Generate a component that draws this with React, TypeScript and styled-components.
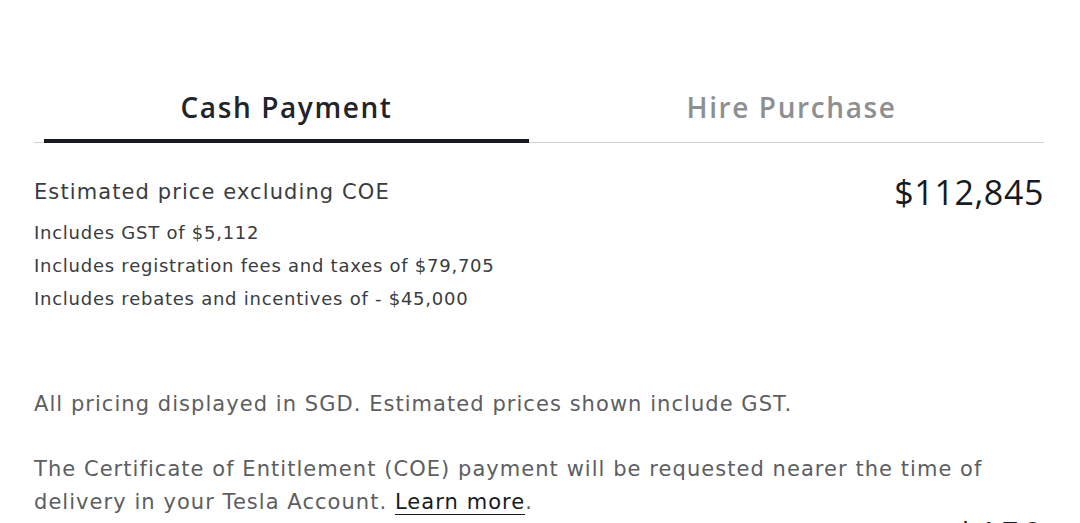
import React, { useState } from "react";
import styled, { createGlobalStyle } from "styled-components";

const Global = createGlobalStyle`
  html, body { margin: 0; padding: 0; background: #ffffff; }
  body { font-family: "DejaVu Sans", "Open Sans", sans-serif; color: #393c41; }
  * { box-sizing: border-box; }
`;

const Page = styled.main`
  width: 1080px;
  padding: 84px 36px 0 34px;
  overflow: hidden;
  height: 523px;
`;

const TabList = styled.div`
  display: flex;
  border-bottom: 1px solid #d0d1d2;
`;

const Tab = styled.button`
  flex: 1;
  padding: 0 10px;
  border: 0;
  background: none;
  cursor: pointer;
  font-family: inherit;
`;

const TabLabel = styled.span<{ $active?: boolean }>`
  display: block;
  padding: 5px 0 14px;
  margin-bottom: -1px;
  font-family: "Open Sans", sans-serif;
  font-size: 28px;
  font-weight: 600;
  letter-spacing: 1.6px;
  line-height: 36px;
  color: ${(p) => (p.$active ? "#222429" : "#8e8f91")};
  border-bottom: 4px solid ${(p) => (p.$active ? "#171a20" : "transparent")};
`;

const PriceRow = styled.section`
  display: flex;
  justify-content: space-between;
  align-items: flex-start;
  margin-top: 34px;
`;

const Breakdown = styled.div`
  display: flex;
  flex-direction: column;
`;

const PriceTitle = styled.div`
  font-size: 21px;
  letter-spacing: 1.1px;
  line-height: 30px;
  color: #393c41;
  margin-bottom: 9px;
`;

const Detail = styled.div`
  font-size: 18px;
  letter-spacing: 0.75px;
  line-height: 33px;
  color: #393c41;
`;

const Amount = styled.div`
  font-family: "Open Sans", sans-serif;
  font-size: 34px;
  letter-spacing: 0.6px;
  line-height: 40px;
  color: #171a20;
  margin-top: -5px;
`;

const Notes = styled.div`
  display: flex;
  flex-direction: column;
  gap: 32px;
  margin-top: 73px;
`;

const Note = styled.p`
  margin: 0;
  font-size: 21px;
  letter-spacing: 1.05px;
  line-height: 33px;
  color: #5c5e62;
`;

const LearnMore = styled.a`
  color: #171a20;
  text-decoration: none;
  border-bottom: 1px solid #171a20;
`;

const BottomRow = styled.div`
  display: flex;
  justify-content: flex-end;
  margin-top: 0;
`;

const BottomAmount = styled(Amount)`
  font-size: 38px;
  margin-top: -4px;
`;

export default function App() {
  const [tab, setTab] = useState(0);
  return (
    <>
      <Global />
      <Page>
        <TabList>
          <Tab onClick={() => setTab(0)}>
            <TabLabel $active={tab === 0}>Cash Payment</TabLabel>
          </Tab>
          <Tab onClick={() => setTab(1)}>
            <TabLabel $active={tab === 1}>Hire Purchase</TabLabel>
          </Tab>
        </TabList>
        <PriceRow>
          <Breakdown>
            <PriceTitle>Estimated price excluding COE</PriceTitle>
            <Detail>Includes GST of $5,112</Detail>
            <Detail>Includes registration fees and taxes of $79,705</Detail>
            <Detail>Includes rebates and incentives of - $45,000</Detail>
          </Breakdown>
          <Amount>$112,845</Amount>
        </PriceRow>
        <Notes>
          <Note>All pricing displayed in SGD. Estimated prices shown include GST.</Note>
          <Note>
            The Certificate of Entitlement (COE) payment will be requested nearer the time of
            <br />
            delivery in your Tesla Account. <LearnMore href="#">Learn more</LearnMore>.
          </Note>
        </Notes>
        <BottomRow>
          <BottomAmount>$150</BottomAmount>
        </BottomRow>
      </Page>
    </>
  );
}
